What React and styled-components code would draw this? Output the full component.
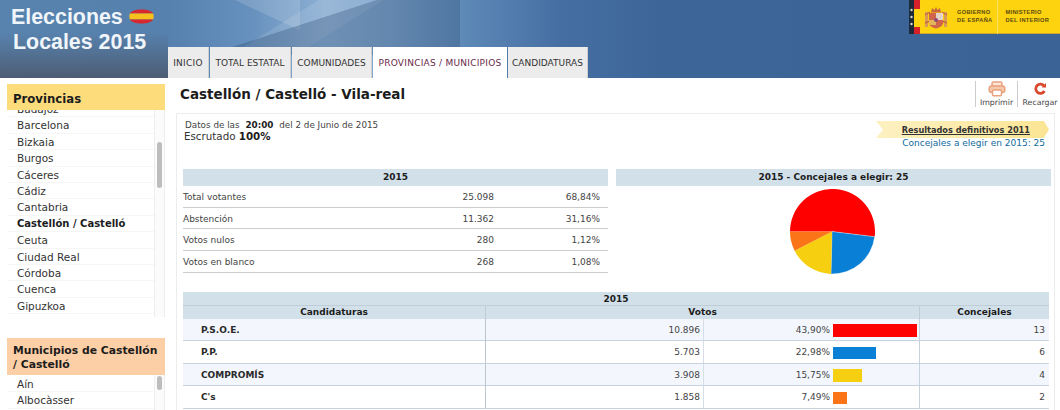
import React from "react";
import styled, { createGlobalStyle } from "styled-components";

const Global = createGlobalStyle`
  html, body { margin: 0; padding: 0; background: #fff; }
  body { width: 1060px; height: 410px; overflow: hidden; font-family: "DejaVu Sans", Verdana, sans-serif; color: #333; }
  * { box-sizing: border-box; }
`;

const Page = styled.div`
  width: 1060px;
  height: 410px;
  overflow: hidden;
  display: flex;
  flex-direction: column;
`;

const Header = styled.header`
  flex: 0 0 78px;
  height: 78px;
  display: flex;
  justify-content: space-between;
  background:
    linear-gradient(162deg, transparent 0 46%, rgba(40,70,110,.30) 46.4% 100%) 160px 0 / 300px 55px no-repeat,
    linear-gradient(205deg, rgba(255,255,255,.14) 0 30%, transparent 30.4%) 170px 0 / 130px 40px no-repeat,
    linear-gradient(148deg, transparent 0 40%, rgba(255,255,255,.10) 40.4% 62%, transparent 62.4%) 200px 0 / 220px 47px no-repeat,
    linear-gradient(180deg, transparent 0 42%, rgba(72,76,88,.68) 100%) 0 0 / 168px 100% no-repeat,
    linear-gradient(90deg, #5883ae 0, #5680ad 170px, #6690bd 250px, #8db0d3 325px, #7ea4cb 390px, #5b87b5 470px, #456fa3 560px, #3d6598 660px, #3c6396 100%);
`;

const Brand = styled.div`
  flex: 0 0 168px;
  padding: 5px 0 0 11px;
  font-family: "Liberation Sans", Arial, sans-serif;
  font-size: 21.4px;
  font-weight: 700;
  line-height: 25px;
  color: #f0f5fa;
`;

const BrandLine = styled.div`
  height: 25px;
  display: flex;
  align-items: center;
  gap: 6px;
  white-space: nowrap;
  margin-left: ${p => p.$indent || 0}px;
`;

const Nav = styled.nav`
  flex: 1;
  display: flex;
  align-items: flex-end;
  gap: 1px;
`;

const Tab = styled.div`
  flex: 0 0 ${p => p.$w}px;
  height: 31px;
  display: flex;
  align-items: center;
  justify-content: center;
  font-size: 9px;
  letter-spacing: ${p => p.$track || 0}px;
  white-space: nowrap;
  color: ${p => (p.$active ? "#6a2a4a" : "#333")};
  background: ${p => (p.$active ? "#fff" : "#ececec")};
  border-right: ${p => (p.$active ? "0" : "1px solid #cfcfcf")};
`;

const GovBand = styled.div`
  flex: 0 0 151px;
  height: 34px;
  display: flex;
  align-items: center;
  background: #fdd20f;
  border-bottom: 1px solid #c9a82b;
`;

const GovText = styled.div`
  font-family: "Liberation Sans", Arial, sans-serif;
  font-weight: 700;
  font-size: 5.7px;
  line-height: 7.5px;
  letter-spacing: .3px;
  color: #5a4a12;
  white-space: nowrap;
  align-self: center;
`;

const GovRule = styled.div`
  width: 1px;
  height: 34px;
  background: #fbe067;
  margin: 0 7px 0 5px;
`;

const Body = styled.div`
  flex: 1;
  display: flex;
  min-height: 0;
`;

const Sidebar = styled.aside`
  flex: 0 0 176px;
  padding: 6px 11px 0 7px;
  overflow: hidden;
`;

const SideHead = styled.div`
  background: ${p => p.$bg};
  font-size: ${p => p.$size}px;
  font-weight: 700;
  line-height: 14px;
  color: #1c1c1c;
  padding: ${p => p.$pad};
  height: ${p => p.$h}px;
`;

const ListWrap = styled.div`
  height: ${p => p.$h}px;
  margin-bottom: ${p => p.$mb || 0}px;
  display: flex;
  overflow: hidden;
`;

const List = styled.div`
  flex: 1;
  overflow: hidden;
  margin-top: ${p => p.$offset || 0}px;
  padding-left: 1px;
`;

const Item = styled.div`
  height: 16.4px;
  line-height: 16.4px;
  padding-left: 9px;
  font-size: ${p => (p.$on ? 10 : 10.5)}px;
  font-weight: ${p => (p.$on ? 700 : 400)};
  color: ${p => (p.$on ? "#1c1c1c" : "#333")};
  border-bottom: 1px solid #f6f6f6;
  white-space: nowrap;
`;

const Track = styled.div`
  flex: 0 0 11px;
  background: #fbfbfb;
  border-left: 1px solid #eee;
  border-right: 1px solid #eee;
  padding: ${p => p.$top}px 2px 0 2px;
`;

const Thumb = styled.div`
  height: ${p => p.$h}px;
  background: #bdbdbd;
  border-radius: 3px;
`;

const Main = styled.main`
  flex: 1;
  display: flex;
  flex-direction: column;
  padding-right: 5px;
  min-width: 0;
`;

const TitleRow = styled.div`
  flex: 0 0 35px;
  display: flex;
  justify-content: space-between;
  align-items: flex-start;
`;

const Title = styled.h1`
  margin: 7px 0 0 4px;
  font-size: 13.5px;
  line-height: 18px;
  font-weight: 700;
  color: #1c1c1c;
`;

const Tools = styled.div`
  display: flex;
  margin: 3px -5px 0 0;
`;

const Tool = styled.div`
  width: ${p => p.$w}px;
  height: 26px;
  padding-left: ${p => p.$pl || 0}px;
  border-left: 1px solid #ccc;
  display: flex;
  flex-direction: column;
  align-items: center;
  font-size: 7.8px;
  line-height: 9px;
  color: #444;
  svg { display: block; height: 16px; margin-bottom: 1px; }
`;

const Panel = styled.section`
  flex: 1;
  border: 1px solid #ececec;
  border-bottom: 0;
  padding: 5px 6px 0 6px;
  min-height: 0;
`;

const InfoRow = styled.div`
  height: 50px;
  display: flex;
  justify-content: space-between;
  padding-left: 1px;
`;

const Stamp = styled.div`
  padding-left: 1px;
  font-size: 8.8px;
  line-height: 12px;
  color: #444;
  b { color: #1c1c1c; margin: 0 3px; }
`;

const Scrut = styled.div`
  font-size: 10.3px;
  line-height: 11px;
  color: #333;
  b { color: #1c1c1c; }
`;

const Results = styled.div`
  width: 173px;
  margin: 2px -1px 0 0;
`;

const Ribbon = styled.div`
  height: 17px;
  display: flex;
  align-items: center;
  justify-content: flex-end;
  padding-right: 19px;
  font-size: 8.2px;
  font-weight: 700;
  color: #333;
  text-decoration: underline;
  background: linear-gradient(90deg, #fdf1c2, #fbe594);
  clip-path: polygon(0 0, 97% 0, 100% 50%, 97% 100%, 0 100%, 4% 50%);
`;

const Elegir = styled.div`
  padding-right: 4px;
  text-align: right;
  font-size: 9px;
  line-height: 11px;
  color: #0f6a9e;
`;

const TopGrid = styled.div`
  display: grid;
  grid-template-columns: 425px 435px;
  column-gap: 8px;
  height: 123px;
`;

const BlueHead = styled.div`
  height: 17px;
  line-height: 17px;
  background: #d2e0ea;
  text-align: center;
  font-size: 9px;
  font-weight: 700;
  color: #1c1c1c;
`;

const StatRow = styled.div`
  height: 21.7px;
  display: grid;
  grid-template-columns: 1fr 91px 106px;
  align-items: center;
  font-size: 9px;
  color: #444;
  padding: 1px 8px 0 0;
  border-bottom: 1px solid #ccc;
  div:not(:first-child) { text-align: right; }
`;

const PieBox = styled.div`
  display: flex;
  justify-content: center;
  padding: 3px 2px 0 0;
  svg { display: block; }
`;

const VoteTable = styled.div`
  width: 866px;
  font-size: 9px;
`;

const YearHead = styled.div`
  height: 14px;
  line-height: 14px;
  background: #d2e0ea;
  border-bottom: 1px solid #bfcdd8;
  text-align: center;
  font-weight: 700;
  color: #1c1c1c;
`;

const Cols = styled.div`
  display: grid;
  grid-template-columns: 302px 218px 130px 86px 130px;
`;

const ColHead = styled(Cols)`
  height: 12.5px;
  line-height: 12.5px;
  background: #d2e0ea;
  font-weight: 700;
  color: #1c1c1c;
  text-align: center;
`;

const HeadCell = styled.div`
  grid-column: span ${p => p.$span || 1};
  border-left: ${p => (p.$first ? "0" : "1px solid #c0ccd6")};
`;

const Row = styled(Cols)`
  height: 22.5px;
  background: ${p => (p.$alt ? "#f3f7fd" : "#fff")};
  border-bottom: 1px solid #c8d2dc;
  align-items: stretch;
`;

const Party = styled.div`
  padding-left: 18px;
  font-weight: 700;
  color: #2a2a2a;
  line-height: 22px;
`;

const Num = styled.div`
  text-align: right;
  padding-right: ${p => p.$pr || 3}px;
  line-height: 22px;
  color: #444;
  border-left: 1px solid ${p => p.$line || "#d5dde6"};
`;

const BarCell = styled.div`
  padding: 5.5px 0 0 0;
`;

const Bar = styled.div`
  height: 12.5px;
  background: ${p => p.$c};
`;

const FlagIcon = () => (
  <svg width="25" height="15" viewBox="0 0 25 15" style={{ marginTop: -2 }}>
    <path d="M1 4.500 C2 2 7 .5 12.500 .5 C18 .5 23 2 24 4.500 Z" fill="#d6282e" />
    <path d="M1 4.500 H24 C25 6.500 25 8.500 24 10.500 H1 C0 8.500 0 6.500 1 4.500 Z" fill="#f6c11d" />
    <path d="M1 10.500 H24 C23 13 18 14.500 12.500 14.500 C7 14.500 2 13 1 10.500 Z" fill="#d6282e" />
  </svg>
);

const GovLogo = () => (
  <svg width="48" height="34" viewBox="0 0 48 34" style={{ display: "block", flex: "0 0 48px" }}>
    <rect width="5" height="34" fill="#1d2a3a" />
    <rect x="5" width="6" height="9" fill="#d5202a" />
    <rect x="5" y="27" width="6" height="7" fill="#d5202a" />
    <circle cx="2.5" cy="10" r="1.2" fill="#d9d9c8" />
    <circle cx="2.5" cy="17" r="1.2" fill="#d9d9c8" />
    <circle cx="2.5" cy="24" r="1.2" fill="#d9d9c8" />
    <rect x="16" y="12" width="3" height="15" fill="#d99a55" />
    <rect x="35" y="12" width="3" height="15" fill="#d99a55" />
    <path d="M16 15 L21 12 M38 15 L33 12 M16 23 L21 21 M38 23 L33 21" stroke="#c9683e" strokeWidth="1.4" />
    <path d="M20 13 H34 V23 C34 26 30 28 27 28.500 C24 28 20 26 20 23 Z" fill="#d0654a" />
    <rect x="27" y="13" width="7" height="7" fill="#e2d3c6" />
    <rect x="20" y="20" width="7" height="5" fill="#e3b45a" />
    <circle cx="27" cy="20" r="2" fill="#8d4a7a" />
    <path d="M22 12.500 L23 8 L25.500 10 L27 7 L28.500 10 L31 8 L32 12.500 Z" fill="#c9683e" />
  </svg>
);

const PrintIcon = () => (
  <svg width="18" height="16" viewBox="0 0 18 16" fill="none" stroke="#e9a27c" strokeWidth="1.5">
    <rect x="4" y="1" width="10" height="4.5" rx="1.5" fill="#fbe6da" />
    <rect x="1.2" y="5" width="15.6" height="6.5" rx="2.5" fill="#f6c9ae" />
    <rect x="4.500" y="9" width="9" height="5.800" rx="1" fill="#fff" />
  </svg>
);

const ReloadIcon = () => (
  <svg width="14" height="16" viewBox="0 0 14 16" fill="none">
    <path d="M11.2 5.2 A4.6 4.6 0 1 0 11.4 10" stroke="#d9482f" strokeWidth="2.8" />
    <path d="M8.6 6.6 H13 V2 Z" fill="#d9482f" />
  </svg>
);

const polar = (a, r = 42.5, cx = 42.5, cy = 42.5) => {
  const t = (a * Math.PI) / 180;
  return [cx + r * Math.cos(t), cy + r * Math.sin(t)];
};
const slice = (a, b) => {
  const [x1, y1] = polar(a);
  const [x2, y2] = polar(b);
  const large = b - a > 180 ? 1 : 0;
  return `M42 42.500 L${x1.toFixed(2)} ${y1.toFixed(2)} A42.5 42.5 0 ${large} 1 ${x2.toFixed(2)} ${y2.toFixed(2)} Z`;
};

const Pie = () => (
  <svg width="85" height="85" viewBox="0 0 85 85">
    <path d={slice(180, 367)} fill="#fe0000" />
    <path d={slice(7, 92)} fill="#0a7fd6" stroke="#fff" strokeWidth=".4" />
    <path d={slice(92, 153)} fill="#f6d010" />
    <path d={slice(153, 180)} fill="#fb7418" />
  </svg>
);

const provincias = ["Badajoz", "Barcelona", "Bizkaia", "Burgos", "Cáceres", "Cádiz", "Cantabria", "Castellón / Castelló", "Ceuta", "Ciudad Real", "Córdoba", "Cuenca", "Gipuzkoa"];
const municipios = ["Aín", "Albocàsser"];
const stats = [
  ["Total votantes", "25.098", "68,84%"],
  ["Abstención", "11.362", "31,16%"],
  ["Votos nulos", "280", "1,12%"],
  ["Votos en blanco", "268", "1,08%"],
];
const parties = [
  ["P.S.O.E.", "10.896", "43,90%", 84, "#fe0000", "13"],
  ["P.P.", "5.703", "22,98%", 43, "#0a7fd6", "6"],
  ["COMPROMÍS", "3.908", "15,75%", 29, "#f6d010", "4"],
  ["C's", "1.858", "7,49%", 14, "#fb7418", "2"],
];

export default function App() {
  return (
    <Page>
      <Global />
      <Header>
        <Brand>
          <BrandLine>Elecciones <FlagIcon /></BrandLine>
          <BrandLine $indent={2}>Locales 2015</BrandLine>
        </Brand>
        <Nav>
          <Tab $w={41} $track={0.25}>INICIO</Tab>
          <Tab $w={81}>TOTAL ESTATAL</Tab>
          <Tab $w={80}>COMUNIDADES</Tab>
          <Tab $w={134} $active $track={0.25}>PROVINCIAS / MUNICIPIOS</Tab>
          <Tab $w={80}>CANDIDATURAS</Tab>
        </Nav>
        <GovBand>
          <GovLogo />
          <GovText>GOBIERNO<br />DE ESPAÑA</GovText>
          <GovRule />
          <GovText>MINISTERIO<br />DEL INTERIOR</GovText>
        </GovBand>
      </Header>
      <Body>
        <Sidebar>
          <SideHead $bg="#fddc7c" $size={11.7} $pad="8px 0 0 6px" $h={26}>Provincias</SideHead>
          <ListWrap $h={207} $mb={21}>
            <List $offset={-9}>
              {provincias.map(p => <Item key={p} $on={p.startsWith("Castell")}>{p}</Item>)}
            </List>
            <Track $top={32}><Thumb $h={46} /></Track>
          </ListWrap>
          <SideHead $bg="#fdcfa6" $size={10.8} $pad="6px 6px 0 6px" $h={37}>Municipios de Castellón / Castelló</SideHead>
          <ListWrap $h={35}>
            <List $offset={1}>
              {municipios.map(p => <Item key={p}>{p}</Item>)}
            </List>
            <Track $top={1}><Thumb $h={14} /></Track>
          </ListWrap>
        </Sidebar>
        <Main>
          <TitleRow>
            <Title>Castellón / Castelló - Vila-real</Title>
            <Tools>
              <Tool $w={42}><PrintIcon />Imprimir</Tool>
              <Tool $w={43} $pl={2}><ReloadIcon />Recargar</Tool>
            </Tools>
          </TitleRow>
          <Panel>
            <InfoRow>
              <div>
                <Stamp>Datos de las <b>20:00</b> del 2 de Junio de 2015</Stamp>
                <Scrut>Escrutado <b>100%</b></Scrut>
              </div>
              <Results>
                <Ribbon>Resultados definitivos 2011</Ribbon>
                <Elegir>Concejales a elegir en 2015: 25</Elegir>
              </Results>
            </InfoRow>
            <TopGrid>
              <div>
                <BlueHead>2015</BlueHead>
                {stats.map(s => (
                  <StatRow key={s[0]}>
                    <div>{s[0]}</div>
                    <div>{s[1]}</div>
                    <div>{s[2]}</div>
                  </StatRow>
                ))}
              </div>
              <div>
                <BlueHead>2015 - Concejales a elegir: 25</BlueHead>
                <PieBox><Pie /></PieBox>
              </div>
            </TopGrid>
            <VoteTable>
              <YearHead>2015</YearHead>
              <ColHead>
                <HeadCell $first>Candidaturas</HeadCell>
                <HeadCell $span={3}>Votos</HeadCell>
                <HeadCell>Concejales</HeadCell>
              </ColHead>
              {parties.map((p, i) => (
                <Row key={p[0]} $alt={i % 2 === 0}>
                  <Party>{p[0]}</Party>
                  <Num $line="#bcc6d0">{p[1]}</Num>
                  <Num>{p[2]}</Num>
                  <BarCell><Bar $c={p[4]} style={{ width: p[3] }} /></BarCell>
                  <Num $line="#c8d2dc" $pr={4}>{p[5]}</Num>
                </Row>
              ))}
            </VoteTable>
          </Panel>
        </Main>
      </Body>
    </Page>
  );
}
